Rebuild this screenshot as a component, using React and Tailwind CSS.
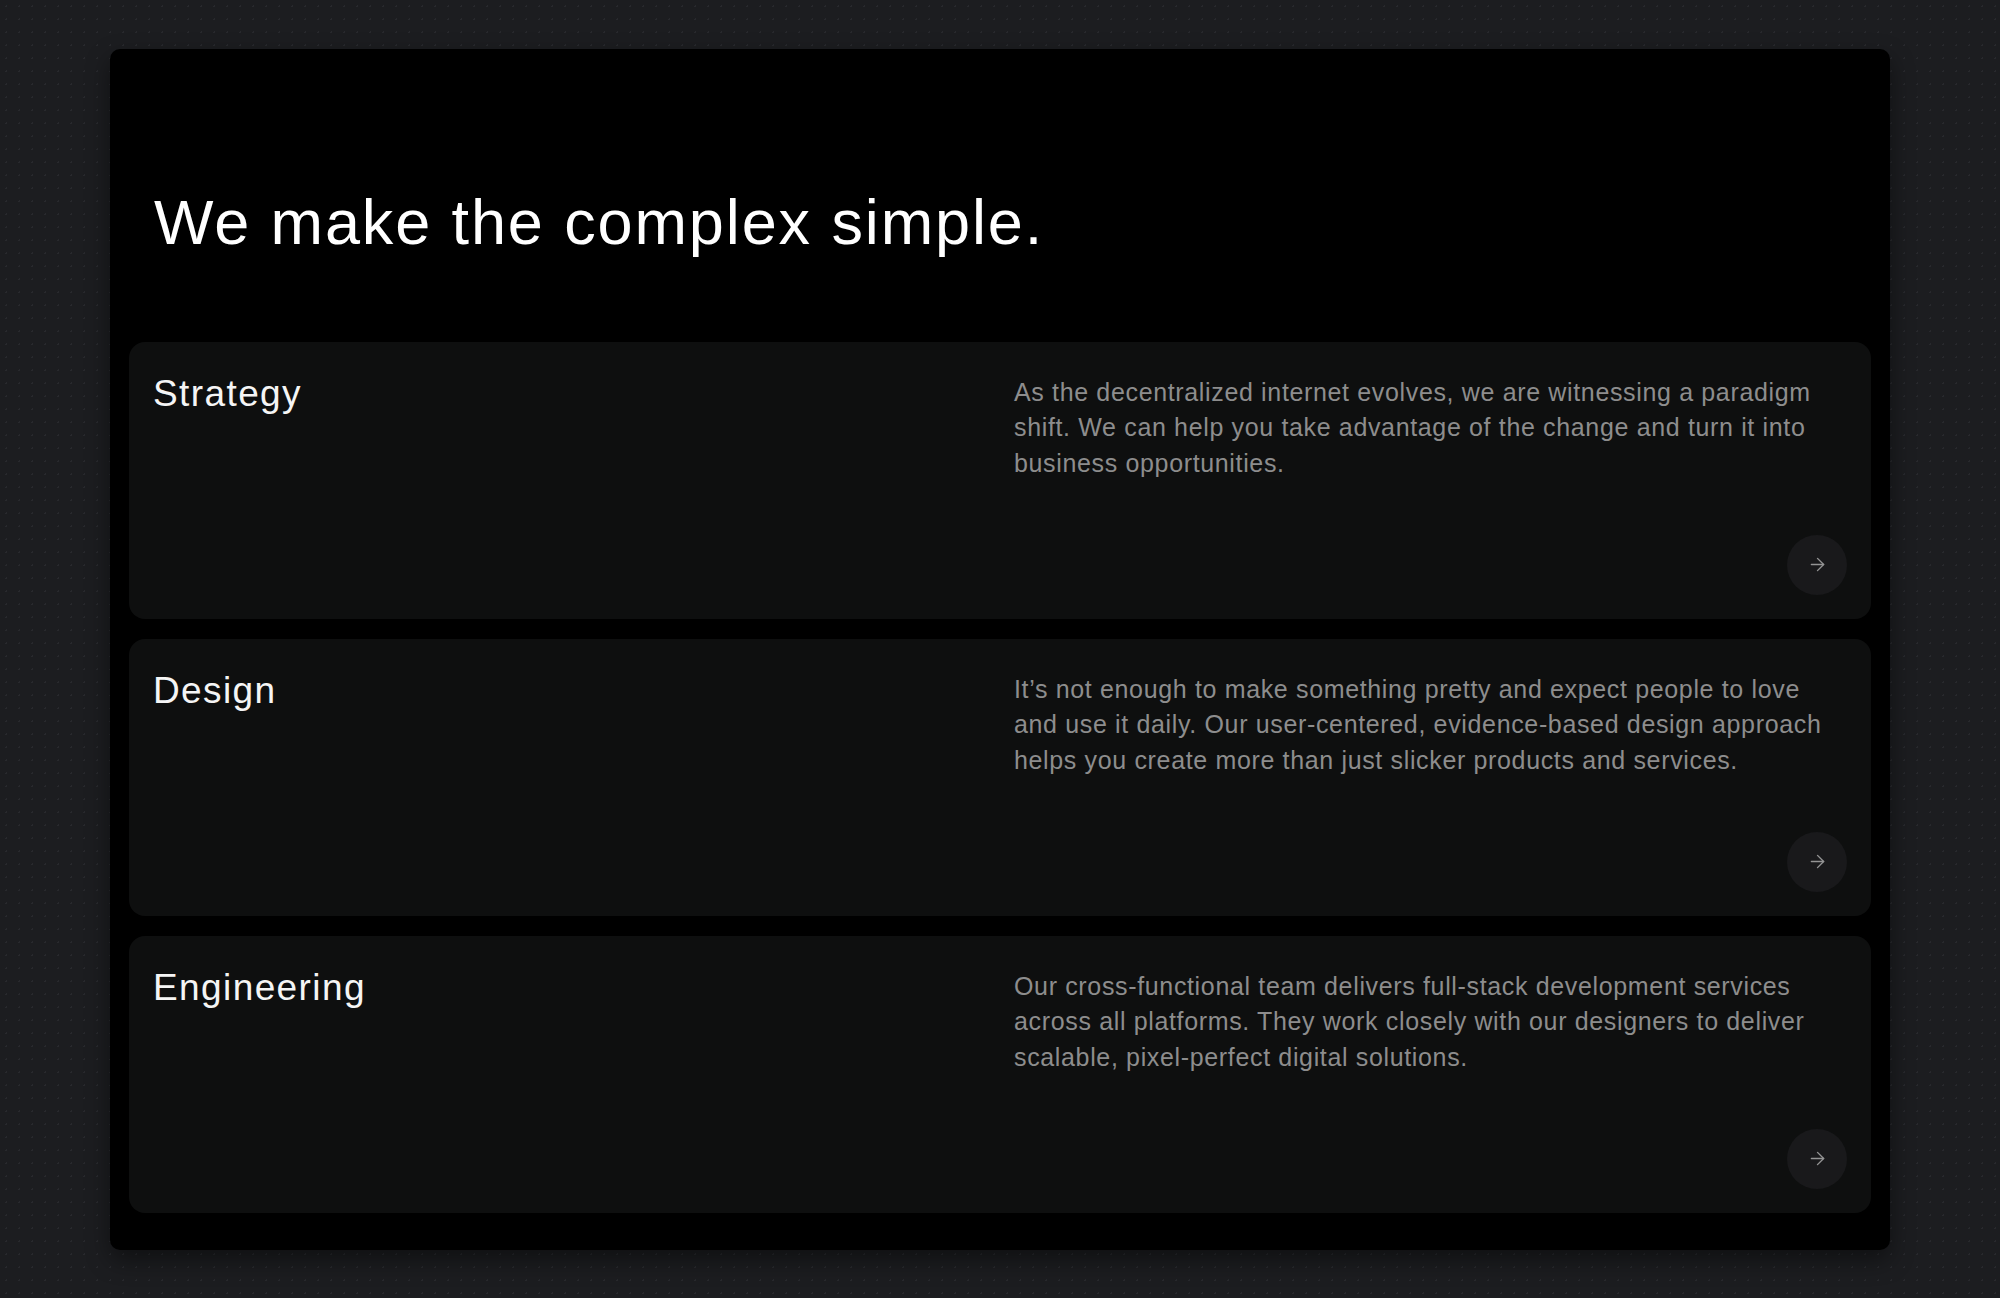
import React from "react";
import { ArrowRight } from "lucide-react";

const services = [
  {
    title: "Strategy",
    text: "As the decentralized internet evolves, we are witnessing a paradigm shift. We can help you take advantage of the change and turn it into business opportunities.",
  },
  {
    title: "Design",
    text: "It’s not enough to make something pretty and expect people to love and use it daily. Our user-centered, evidence-based design approach helps you create more than just slicker products and services.",
  },
  {
    title: "Engineering",
    text: "Our cross-functional team delivers full-stack development services across all platforms. They work closely with our designers to deliver scalable, pixel-perfect digital solutions.",
  },
];

function ServiceCard({ title, text }) {
  return (
    <div className="h-[277px] rounded-2xl bg-[#0e0f0f] p-6 grid grid-cols-2 gap-[28px]">
      <h3 className="text-[37px] leading-[1.5] tracking-[1.4px] text-[#f5f5f5] font-['Liberation_Sans',sans-serif]">
        {title}
      </h3>
      <div className="flex flex-col justify-between">
        <p className="pt-[9px] text-[25px] leading-[35.5px] tracking-[0.65px] text-[#8d8d8d] font-['Liberation_Sans',sans-serif]">
          {text}
        </p>
        <button className="self-end w-[60px] h-[60px] rounded-full bg-[#19191b] flex items-center justify-center text-[#949494]">
          <ArrowRight size={21} strokeWidth={1.6} />
        </button>
      </div>
    </div>
  );
}

export default function App() {
  return (
    <div className="min-h-screen bg-[#1c1d20] bg-[radial-gradient(#28292d_1px,transparent_1px)] bg-[size:13px_13px] pt-[49px] pb-[48px]">
      <div className="mx-auto w-[1780px] rounded-[10px] bg-black px-[19px] pt-[136px] pb-[37px] shadow-[0_10px_24px_rgba(0,0,0,0.45)]">
        <h1 className="ml-[25px] mb-[81px] text-[63px] leading-[1.2] tracking-[0.03em] text-white font-['Liberation_Sans',sans-serif]">
          We make the complex simple.
        </h1>
        <div className="flex flex-col gap-5">
          {services.map((s) => (
            <ServiceCard key={s.title} {...s} />
          ))}
        </div>
      </div>
    </div>
  );
}
